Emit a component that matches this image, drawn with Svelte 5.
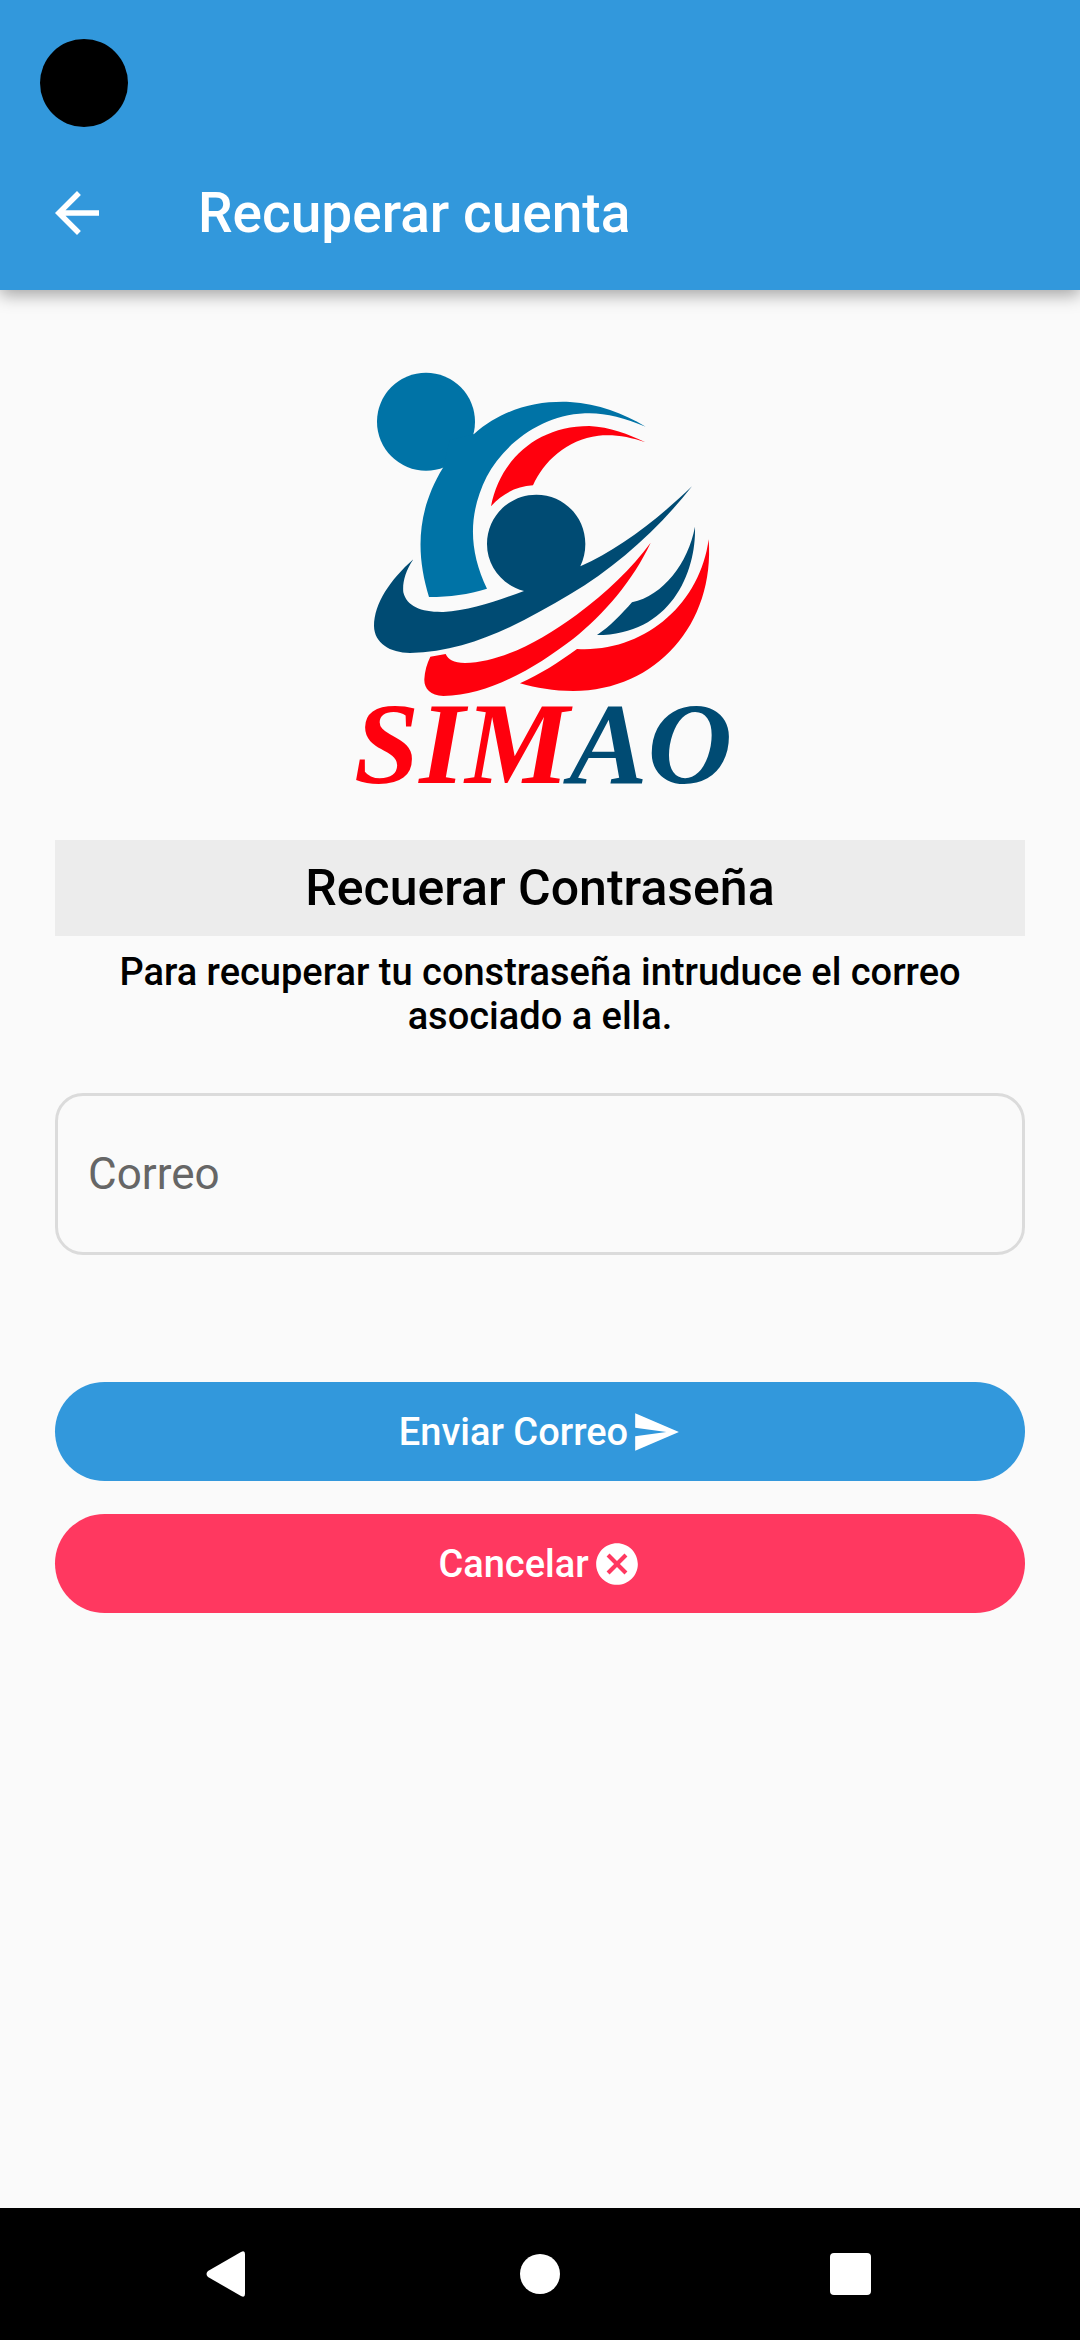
<script lang="ts">
	let correo = $state('');

	function enviarCorreo(event: SubmitEvent) {
		event.preventDefault();
	}

	function cancelar() {
		correo = '';
	}
</script>

<div class="screen">
	<header>
		<div class="status-bar">
			<div class="camera"></div>
		</div>
		<div class="app-bar">
			<button type="button" class="back" aria-label="Volver">
				<svg viewBox="0 0 24 24" class="back-icon">
					<path d="M20 11H7.83l5.59-5.59L12 4l-8 8 8 8 1.41-1.41L7.83 13H20v-2z" />
				</svg>
			</button>
			<h1>Recuperar cuenta</h1>
		</div>
	</header>

	<main>
		<svg viewBox="0 0 1200 1380" class="logo" role="img" aria-label="SIMAO">
			<!-- Adult figure -->
			<g fill="#0073a6">
				<circle cx="258" cy="185" r="147" />
				<path d="M402 222C490 145 590 122 690 126C775 131 850 160 917 200C850 172 790 157 735 160C600 166 490 255 440 350C385 460 385 570 441 686C385 703 330 711 267 711C230 590 225 460 309 323L330 240Z" />
			</g>

			<!-- Child figure with the cradling arm -->
			<g fill="#004b73">
				<path d="M552 693C488 676 441 620 441 552C441 470 507 404 589 404C671 404 736 470 736 552C736 576 731 598 721 619C830 570 940 490 1056 379C955 507 830 620 690 703C550 786 390 876 210 879C150 878 103 850 102 798C103 730 150 660 220 598C195 635 187 670 190 697C200 740 245 757 310 756C390 752 470 723 552 693Z" />
				<path d="M1065 500C1069 640 990 825 771 825C810 800 845 762 876 727C970 706 1044 610 1065 500Z" />
			</g>

			<!-- Red ribbons -->
			<g fill="#ff000d">
				<path d="M453 439C480 300 590 198 748 198C810 201 865 222 916 247C870 230 820 222 775 227C680 239 610 305 579 376C530 379 488 400 453 439Z" />
				<path d="M271 890L317 882C325 900 340 907 375 909C480 907 600 845 710 764C800 697 875 625 932 548C880 660 790 765 700 836C590 920 450 1006 310 1008C270 1007 252 985 253 958C254 934 261 910 271 890Z" />
				<path d="M1106 538C1125 790 950 993 700 993C640 993 590 984 540 970C600 943 655 908 711 867C910 879 1080 735 1106 538Z" />
			</g>

			<text x="42" y="1268" class="wordmark"><tspan fill="#ff000d">SIM</tspan><tspan fill="#004b73">AO</tspan></text>
		</svg>

		<h2>Recuerar Contraseña</h2>
		<p>Para recuperar tu constraseña intruduce el correo asociado a ella.</p>

		<form onsubmit={enviarCorreo}>
			<input type="email" placeholder="Correo" aria-label="Correo" bind:value={correo} />

			<div class="actions">
				<button type="submit" class="action send">
					Enviar Correo
					<svg viewBox="0 0 24 24" class="action-icon">
						<path d="M2.01 21L23 12 2.01 3 2 10l15 2-15 2z" />
					</svg>
				</button>
				<button type="button" class="action cancel" onclick={cancelar}>
					Cancelar
					<svg viewBox="0 0 24 24" class="action-icon">
						<path d="M12 2C6.47 2 2 6.47 2 12s4.47 10 10 10 10-4.47 10-10S17.53 2 12 2zm5 13.59L15.59 17 12 13.41 8.41 17 7 15.59 10.59 12 7 8.41 8.41 7 12 10.59 15.59 7 17 8.41 13.41 12 17 15.59z" />
					</svg>
				</button>
			</div>
		</form>
	</main>

	<nav>
		<button type="button" aria-label="Atrás">
			<svg viewBox="0 0 48 48" class="nav-icon">
				<path d="M35 2Q39 0 39 4V44Q39 48 35 46L2 27Q-1 24 2 21Z" />
			</svg>
		</button>
		<button type="button" aria-label="Inicio">
			<svg viewBox="0 0 48 48" class="nav-icon">
				<circle cx="24" cy="24" r="20" />
			</svg>
		</button>
		<button type="button" aria-label="Recientes">
			<svg viewBox="0 0 48 48" class="nav-icon">
				<rect x="4" y="3" width="41" height="42" rx="4" />
			</svg>
		</button>
	</nav>
</div>

<style>
	:global(body) {
		margin: 0;
		background: #fafafa;
	}

	.screen {
		display: flex;
		flex-direction: column;
		min-height: 100vh;
		font-family: Roboto, sans-serif;
		font-weight: 500;
		color: #000;
	}

	button {
		border: none;
		padding: 0;
		background: none;
		font: inherit;
		color: inherit;
		cursor: pointer;
	}

	svg {
		display: block;
		fill: currentColor;
	}

	header {
		background: #3298dc;
		color: #fff;
		box-shadow: 0 5px 16px rgba(0, 0, 0, 0.35);
	}

	.status-bar {
		box-sizing: border-box;
		height: 136px;
		padding: 39px 40px 0;
	}

	.camera {
		width: 88px;
		height: 88px;
		border-radius: 50%;
		background: #000;
	}

	.app-bar {
		display: flex;
		align-items: center;
		gap: 88px;
		height: 154px;
		padding: 0 44px;
	}

	.back-icon {
		width: 66px;
		height: 66px;
	}

	h1 {
		margin: 0;
		font-size: 55px;
		font-weight: 500;
		line-height: 64px;
	}

	main {
		flex: 1;
		padding: 70px 55px;
	}

	.logo {
		width: 400px;
		height: 460px;
		margin: 0 auto 20px;
	}

	.wordmark {
		font-family: 'Liberation Serif', serif;
		font-size: 352px;
		font-weight: 700;
		font-style: italic;
	}

	h2 {
		margin: 0;
		padding: 18px 0;
		background: #ececec;
		font-size: 50px;
		font-weight: 500;
		line-height: 60px;
		text-align: center;
	}

	p {
		margin: 14px 28px 55px;
		font-size: 38px;
		line-height: 44px;
		text-align: center;
	}

	input {
		display: block;
		box-sizing: border-box;
		width: 100%;
		height: 162px;
		padding: 0 30px;
		border: 3px solid #dbdbdb;
		border-radius: 28px;
		background: transparent;
		font: inherit;
		font-size: 44px;
		font-weight: 400;
		color: #000;
	}

	input::placeholder {
		color: #666;
		opacity: 1;
	}

	.actions {
		display: flex;
		flex-direction: column;
		gap: 33px;
		margin-top: 127px;
	}

	.action {
		display: flex;
		align-items: center;
		justify-content: center;
		gap: 3px;
		height: 99px;
		border-radius: 50px;
		font-size: 38px;
		line-height: 44px;
		color: #fff;
	}

	.send {
		background: #3298dc;
	}

	.cancel {
		background: #ff3860;
	}

	.action-icon {
		width: 50px;
		height: 50px;
	}

	nav {
		display: grid;
		grid-template-columns: repeat(3, 1fr);
		height: 132px;
		padding: 0 75px;
		background: #000;
		color: #fff;
	}

	.nav-icon {
		width: 48px;
		height: 48px;
		margin: 0 auto;
	}
</style>
